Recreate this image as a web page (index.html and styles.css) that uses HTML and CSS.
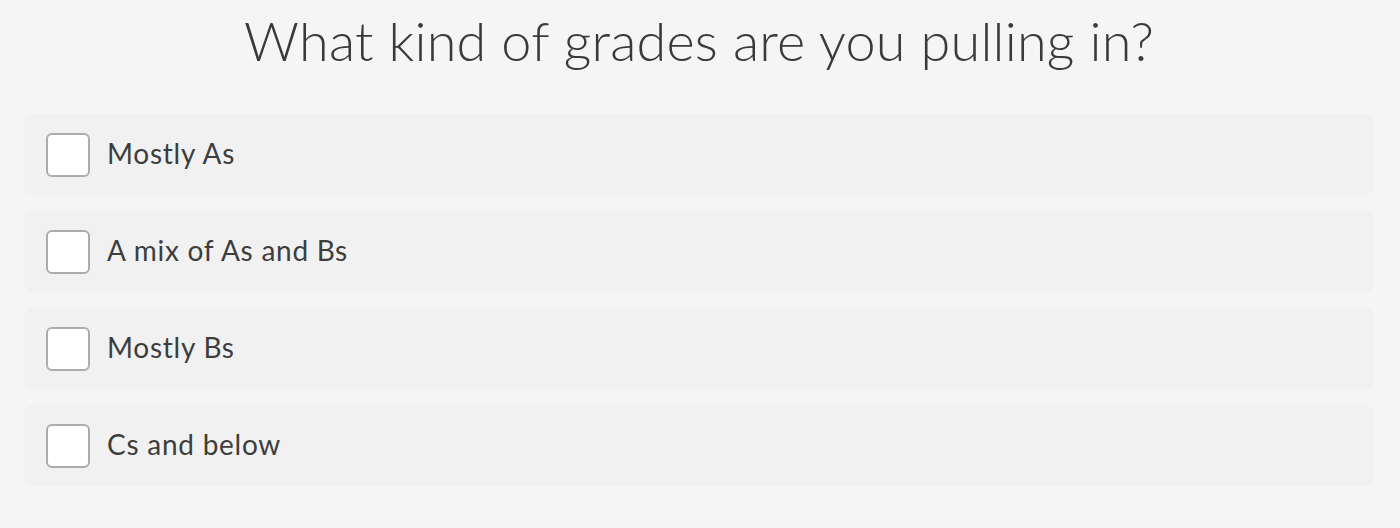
FILE: index.html
```html
<!DOCTYPE html>
<html>
<head>
<meta charset="utf-8">
<link rel="stylesheet" href="styles.css">
</head>
<body>
<div class="page">
  <h1 class="title">What kind of grades are you pulling in?</h1>
  <div class="options">
    <label class="option"><span class="box"></span><span class="label">Mostly As</span></label>
    <label class="option"><span class="box"></span><span class="label">A mix of As and Bs</span></label>
    <label class="option"><span class="box"></span><span class="label">Mostly Bs</span></label>
    <label class="option"><span class="box"></span><span class="label">Cs and below</span></label>
  </div>
</div>
</body>
</html>
```

FILE: styles.css
```css
html, body {
  margin: 0;
  padding: 0;
  background: #f4f5f4;
}
.page {
  font-family: "Lato", "Open Sans", sans-serif;
  color: #3b3b3b;
  padding: 0 26px 0 24px;
}
.title {
  margin: 0;
  padding-top: 9px;
  height: 102px;
  box-sizing: border-box;
  text-align: center;
  font-weight: 300;
  font-size: 54px;
  letter-spacing: 0.2px;
  line-height: 64px;
  color: #3a3a3a;
}
.options {
  display: flex;
  flex-direction: column;
  gap: 16px;
  padding-top: 12px;
}
.option {
  display: flex;
  align-items: center;
  height: 81px;
  background: #f1f1f1;
  border-radius: 9px;
  padding-left: 22px;
}
.box {
  width: 40px;
  height: 40px;
  border: 2px solid #acacac;
  border-radius: 6px;
  background: #fff;
  flex: none;
}
.label {
  margin-left: 17px;
  margin-bottom: 3px;
  font-size: 28px;
  letter-spacing: 0.75px;
  color: #3d3d3d;
}
```
